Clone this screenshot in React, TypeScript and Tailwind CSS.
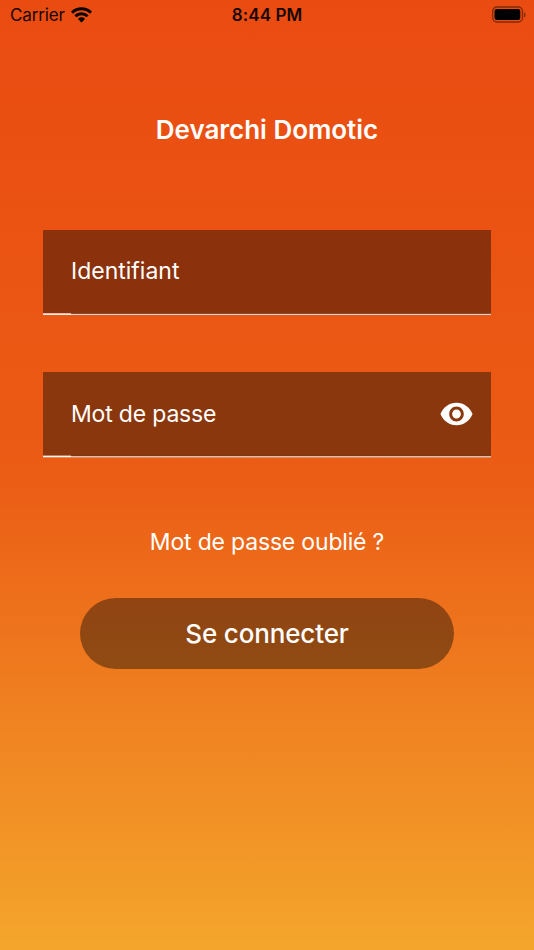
export default function App() {
  return (
    <main className="flex h-[950px] w-full flex-col bg-[linear-gradient(180deg,#ea4b11_0%,#eb5c15_50%,#f4a62c_100%)] font-['Inter','Liberation_Sans',sans-serif] text-white">
      <header className="grid h-[30px] grid-cols-[1fr_auto_1fr] items-center pr-[8px] pl-[10px] text-[17px] text-[#160702]">
        <div className="flex items-center gap-[6px]">
          <span className="pt-[2px] tracking-[-0.15px]">Carrier</span>
          <svg width="21" height="16" viewBox="0 0 22 16" fill="#0a0301">
            <path d="M11 0C6.900 0 3.100 1.600.300 4.200a.5.5 0 0 0 0 .7l1.500 1.500c.2.200.5.200.7 0a12.300 12.300 0 0 1 17 0c.2.200.5.200.7 0l1.500-1.500a.5.5 0 0 0 0-.7A15.600 15.600 0 0 0 11 0Z" />
            <path d="M11 5.200c-2.700 0-5.200 1-7.100 2.800a.5.5 0 0 0 0 .7l1.500 1.500c.2.200.5.200.7 0a7.100 7.100 0 0 1 9.800 0c.2.200.5.200.7 0l1.500-1.500a.5.5 0 0 0 0-.7A10.400 10.400 0 0 0 11 5.200Z" />
            <path d="M11 10.400c-1.300 0-2.500.5-3.400 1.300a.5.5 0 0 0 0 .7l3 3.100c.2.200.6.200.8 0l3-3.100a.5.5 0 0 0 0-.7 5 5 0 0 0-3.400-1.300Z" />
          </svg>
        </div>
        <time className="pt-[2px] pr-[2px] text-center font-semibold tracking-[0.1px]">8:44 PM</time>
        <svg className="justify-self-end" width="34" height="18" viewBox="0 0 34 18">
          <rect x=".7" y="1" width="29.800" height="15" rx="4.200" fill="none" stroke="#4a1905" strokeWidth="1.300" strokeOpacity=".65" />
          <rect x="2.500" y="3" width="25.800" height="11" rx="2.200" fill="#000" />
          <path d="M32.200 6.200c1.700.8 1.700 4.600 0 5.400Z" fill="#4a1905" fillOpacity=".75" />
        </svg>
      </header>
      <h1 className="mt-[84px] text-center text-[26px] leading-[32px] font-semibold tracking-[-0.03px]">Devarchi Domotic</h1>
      <form className="mt-[83.5px] flex flex-col px-[43px]">
        <div className="flex h-[85.5px] flex-col bg-[#8b320c] text-[23px]">
          <div className="flex flex-1 items-center px-[28px] pb-px">Identifiant</div>
          <div className="flex h-[2px]">
            <span className="w-[28px] bg-[linear-gradient(180deg,#e0bcae_50%,#fbece5_50%)]" />
            <span className="flex-1 bg-[linear-gradient(180deg,#81503c_50%,#e6d3ca_50%)]" />
          </div>
        </div>
        <div className="mt-[57px] flex h-[86px] flex-col bg-[#8b370d] text-[23px]">
          <div className="flex flex-1 items-center justify-between pr-[17px] pl-[28px]">
            <span className="pt-[2px] tracking-[-0.18px]">Mot de passe</span>
            <svg width="35" height="36" viewBox="0 0 24 24" preserveAspectRatio="none" fill="currentColor">
              <path d="M12 4.500C7 4.500 2.730 7.610 1 12c1.730 4.390 6 7.500 11 7.500s9.270-3.110 11-7.500c-1.730-4.390-6-7.500-11-7.500zM12 17c-2.760 0-5-2.240-5-5s2.240-5 5-5 5 2.240 5 5-2.240 5-5 5zm0-8c-1.660 0-3 1.340-3 3s1.340 3 3 3 3-1.340 3-3-1.340-3-3-3z" />
            </svg>
          </div>
          <div className="flex h-[3px]">
            <span className="w-[28px] bg-[linear-gradient(180deg,#b9806a_33.3%,#fff7f2_33.3%,#fff7f2_66.6%,#f28a57_66.6%)]" />
            <span className="flex-1 bg-[linear-gradient(180deg,#783917_33.3%,#d0c1b8_33.3%,#d0c1b8_66.6%,#f08753_66.6%)]" />
          </div>
        </div>
        <a className="mt-[68px] text-center text-[23px] leading-[32px] tracking-[-0.18px]">Mot de passe oublié ?</a>
        <button type="button" className="mx-auto mt-[40px] h-[71px] w-[374px] rounded-full bg-[linear-gradient(180deg,#904412,#904b13)] text-[26px] font-medium tracking-[-0.15px]">Se connecter</button>
      </form>
    </main>
  );
}
